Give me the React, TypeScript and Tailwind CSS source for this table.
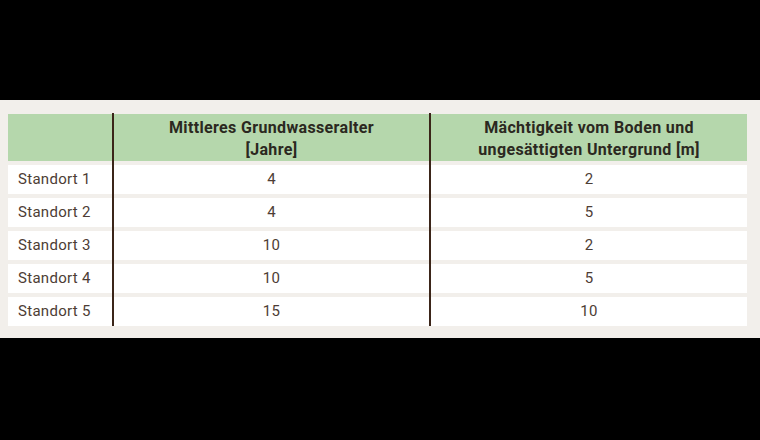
import React from 'react';

const ROWS = [
  { name: 'Standort 1', age: '4', depth: '2' },
  { name: 'Standort 2', age: '4', depth: '5' },
  { name: 'Standort 3', age: '10', depth: '2' },
  { name: 'Standort 4', age: '10', depth: '5' },
  { name: 'Standort 5', age: '15', depth: '10' },
];

function Column({
  width,
  header,
  cells,
  align,
}: {
  width: string;
  header: React.ReactNode;
  cells: string[];
  align: 'left' | 'center';
}) {
  return (
    <div className={`flex flex-col gap-[4px] ${width}`}>
      <div className="h-[47px] bg-[#b5d7ac] flex items-center justify-center text-center text-[16px] font-bold leading-[22px] tracking-[0.35px] text-[#2b2820] pt-[3px]">
        {header}
      </div>
      {cells.map((c, i) => (
        <div
          key={i}
          className={`h-[29px] bg-white flex items-center text-[15px] tracking-[0.3px] text-[#4d3d35] ${
            align === 'left' ? 'justify-start pl-[10px]' : 'justify-center'
          }`}
        >
          {c}
        </div>
      ))}
    </div>
  );
}

export default function App() {
  return (
    <div className="w-[760px] h-[440px] bg-black flex flex-col" style={{ fontFamily: 'Roboto, "Liberation Sans", sans-serif' }}>
      <div className="h-[100px]" />
      {/* beige panel holding the table */}
      <div className="h-[238px] bg-[#f2efeb] pt-[14px] px-[8px]">
        <div className="flex">
          <Column width="w-[104px]" header="" cells={ROWS.map((r) => r.name)} align="left" />
          <div className="w-[2px] bg-[#3b2519] -mt-[1px] h-[213px]" />
          <Column
            width="w-[315px]"
            header={
              <span>
                Mittleres Grundwasseralter
                <br />
                [Jahre]
              </span>
            }
            cells={ROWS.map((r) => r.age)}
            align="center"
          />
          <div className="w-[2px] bg-[#3b2519] -mt-[1px] h-[213px]" />
          <Column
            width="w-[316px]"
            header={
              <span>
                Mächtigkeit vom Boden und
                <br />
                ungesättigten Untergrund [m]
              </span>
            }
            cells={ROWS.map((r) => r.depth)}
            align="center"
          />
        </div>
      </div>
    </div>
  );
}
